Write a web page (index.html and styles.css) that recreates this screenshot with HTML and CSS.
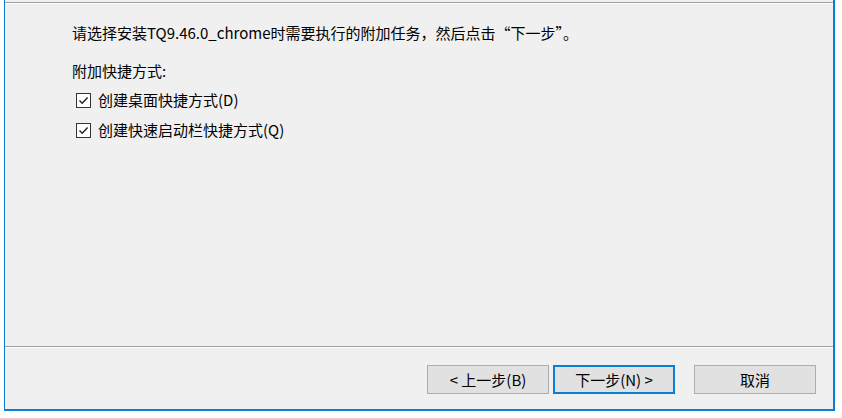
FILE: index.html
```html
<!DOCTYPE html>
<html lang="zh-CN">
<head>
    <meta charset="UTF-8" />
    <title>安装 - TQ9.46.0_chrome</title>
    <link rel="stylesheet" href="styles.css">
</head>
<body>
<div class="window">
    <div class="rule"></div>
    <div class="page">
        <p class="intro">请选择安装TQ9.46.0_chrome时需要执行的附加任务，然后点击“下一步”。</p>
        <p class="group-title">附加快捷方式:</p>
        <label class="check">
            <input type="checkbox" checked />
            <span class="box">
                <svg width="13" height="13" viewBox="0 0 13 13"><path d="M2.5 6.5 L5.2 9.2 L10.6 3.4" fill="none" stroke="#222" stroke-width="1.4"/></svg>
            </span>
            <span>创建桌面快捷方式(D)</span>
        </label>
        <label class="check">
            <input type="checkbox" checked />
            <span class="box">
                <svg width="13" height="13" viewBox="0 0 13 13"><path d="M2.5 6.5 L5.2 9.2 L10.6 3.4" fill="none" stroke="#222" stroke-width="1.4"/></svg>
            </span>
            <span>创建快速启动栏快捷方式(Q)</span>
        </label>
    </div>
    <div class="rule"></div>
    <div class="buttons">
        <button type="button">&lt; 上一步(B)</button>
        <button type="button" class="default">下一步(N) &gt;</button>
        <button type="button" class="cancel">取消</button>
    </div>
</div>
</body>
</html>
```

FILE: styles.css
```css
body {
    margin: 0;
    background-color: #fff;
    font-family: "Noto Sans CJK SC", "Noto Sans", sans-serif;
    font-size: 15px;
    color: #000;
}
.window {
    box-sizing: border-box;
    width: 831px;
    height: 411px;
    margin-left: 4px;
    padding-top: 2px;
    background-color: #f0f0f0;
    border-left: 1px solid #0a7fd8;
    border-right: 2px solid #0a7fd8;
    border-bottom: 2px solid #0a7fd8;
    display: flex;
    flex-direction: column;
}
.rule {
    border-top: 1px solid #a0a0a0;
    border-bottom: 1px solid #fff;
}
.page {
    flex: 1;
    padding: 19px 0 0 67px;
}
p {
    margin: 0;
    line-height: 20px;
}
.intro {
    margin-bottom: 18px;
}
.group-title {
    margin-bottom: 9px;
}
.check {
    display: flex;
    align-items: center;
    height: 20px;
    margin-bottom: 10px;
    line-height: 20px;
}
.check input {
    display: none;
}
.check .box {
    box-sizing: border-box;
    width: 15px;
    height: 15px;
    margin: 0 7px 0 4px;
    border: 1px solid #333;
    background-color: #fff;
    display: flex;
    align-items: center;
    justify-content: center;
}
.check .box svg {
    display: block;
}
.buttons {
    display: flex;
    justify-content: flex-end;
    gap: 4px;
    padding: 17px 17px 0 0;
    height: 61px;
    box-sizing: border-box;
}
button {
    box-sizing: border-box;
    width: 122px;
    height: 29px;
    padding: 0;
    background-color: #e1e1e1;
    border: 1px solid #adadad;
    font-family: "Noto Sans CJK SC", "Noto Sans", sans-serif;
    font-size: 15px;
    color: #000;
}
button.default {
    border: 2px solid #0a7fd8;
}
button.cancel {
    margin-left: 15px;
}
```
